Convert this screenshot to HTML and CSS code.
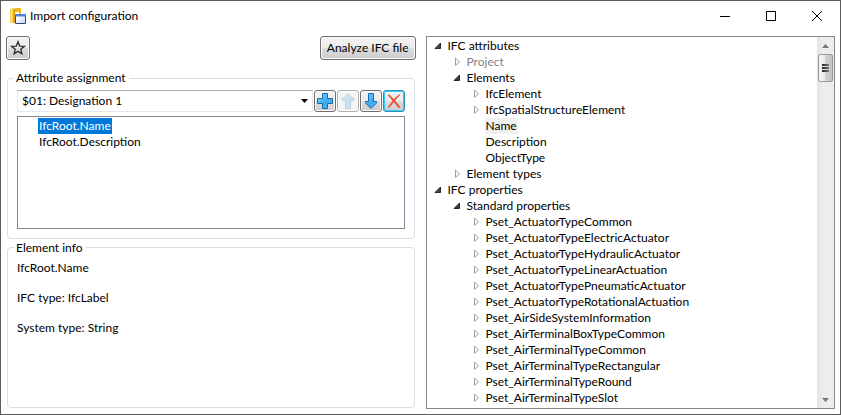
FILE: index.html
```html
<!DOCTYPE html>
<html lang="en">
<head>
<meta charset="utf-8">
<title>Import configuration</title>
<link rel="stylesheet" href="styles.css">
</head>
<body>
<div class="window">
  <header class="titlebar">
    <svg class="app-icon" width="16" height="16" viewBox="0 0 16 16" aria-hidden="true">
      <defs>
        <linearGradient id="gold" x1="0" x2="1"><stop offset="0" stop-color="#f3c437"/><stop offset=".3" stop-color="#fdeb9c"/><stop offset=".6" stop-color="#f2bd24"/><stop offset="1" stop-color="#c98f00"/></linearGradient>
        <linearGradient id="pane" x2="1" y2="1"><stop offset=".3" stop-color="#fff"/><stop offset="1" stop-color="#bcd0f5"/></linearGradient>
      </defs>
      <path fill="#f0b923" d="M5 0h6v14H5z"/>
      <path fill="#fffbe8" d="M5 4h4v10H5z"/>
      <path fill="#222" d="M5 14h3v1H5z"/>
      <path fill="url(#gold)" d="M0 1Q2.500 -.5 5 1V14.500Q2.500 16 0 14.500z"/>
      <path fill="url(#pane)" stroke="#33477d" d="M5.500 6.500h10v9h-10z"/>
      <path fill="#4f7ce0" d="M5 6h11v2.500H5z"/>
    </svg>
    <h1 class="title">Import configuration</h1>
    <div class="caption-buttons">
      <button class="caption" aria-label="Minimize"><svg width="10" height="10"><path d="M0 5.500h10"/></svg></button>
      <button class="caption" aria-label="Maximize"><svg width="10" height="10"><path d="M.5 .5h9v9h-9z"/></svg></button>
      <button class="caption" aria-label="Close"><svg width="10" height="10"><path d="M0 0l10 10M10 0L0 10"/></svg></button>
    </div>
  </header>
  <main class="content">
    <div class="left">
      <div class="toolbar">
        <button class="btn icon-btn" aria-label="Favorites"><svg width="16" height="16" viewBox="0 0 16 16"><path fill="none" stroke="#333" stroke-width="1.400" d="M8 1.800l1.700 4.300 4.600.3-3.500 2.900 1.100 4.500L8 11.300l-3.900 2.500 1.100-4.500-3.500-2.900 4.600-.3z"/></svg></button>
        <button class="btn">Analyze IFC file</button>
      </div>
      <fieldset class="group">
        <legend>Attribute assignment</legend>
        <div class="assign-row">
          <div class="combo">
            <select aria-label="Attribute"><option>$01: Designation 1</option></select>
            <svg class="combo-arrow" width="7" height="4" aria-hidden="true"><path d="M0 0h7L3.500 4z"/></svg>
          </div>
          <button class="btn tool" aria-label="Add"><svg width="18" height="18" viewBox="0 0 18 18">
            <defs><linearGradient id="blue" x2="1" y2="1"><stop offset="0" stop-color="#8fd6fb"/><stop offset=".55" stop-color="#3aaaf0"/><stop offset="1" stop-color="#4fc0fa"/></linearGradient></defs>
            <path fill="url(#blue)" stroke="#1969ad" d="M6.500 1.500h5v5h5v5h-5v5h-5v-5h-5v-5h5z"/></svg></button>
          <button class="btn tool" aria-label="Move up" disabled><svg width="18" height="18" viewBox="0 0 18 18"><path fill="url(#blue)" stroke="#1969ad" d="M9 1.500L14.500 7v1.500h-3v8h-5v-8h-3V7z"/></svg></button>
          <button class="btn tool" aria-label="Move down"><svg width="18" height="18" viewBox="0 0 18 18"><path fill="url(#blue)" stroke="#1969ad" d="M6.500 1.500h5v8h3V11L9 16.500 3.500 11V9.500h3z"/></svg></button>
          <button class="btn tool hot" aria-label="Delete"><svg width="18" height="18" viewBox="0 0 18 18"><path fill="#f2502f" stroke="#d43420" stroke-width=".3" d="M3.800 2.400Q6.500 4.400 8.800 7.600 11.500 4.200 14.600 2.400l.5.5Q12.200 5.500 9.800 8.700q2.900 3 5.200 6.200l-1.200 1Q11.200 12.800 8.800 10.100 6.600 13 3.900 15.600l-.9-.8Q5.700 12 7.700 8.900 5.500 5.800 2.900 3.300z"/></svg></button>
        </div>
        <ul class="list" role="listbox" aria-label="Assigned attributes">
          <li role="option" aria-selected="true"><span>IfcRoot.Name</span></li>
          <li role="option" aria-selected="false"><span>IfcRoot.Description</span></li>
        </ul>
      </fieldset>
      <fieldset class="group info">
        <legend>Element info</legend>
        <p>IfcRoot.Name</p>
        <p>IFC type: IfcLabel</p>
        <p>System type: String</p>
      </fieldset>
    </div>
    <div class="tree-box">
      <ul class="tree" role="tree" aria-label="IFC tree">
        <li><div class="node"><button class="toggle open" aria-label="Collapse"></button><span>IFC attributes</span></div>
          <ul>
            <li><div class="node muted"><button class="toggle" aria-label="Expand"></button><span>Project</span></div></li>
            <li><div class="node"><button class="toggle open" aria-label="Collapse"></button><span>Elements</span></div>
              <ul>
                <li><div class="node"><button class="toggle" aria-label="Expand"></button><span>IfcElement</span></div></li>
                <li><div class="node"><button class="toggle" aria-label="Expand"></button><span>IfcSpatialStructureElement</span></div></li>
                <li><div class="node leaf current"><span>Name</span></div></li>
                <li><div class="node leaf"><span>Description</span></div></li>
                <li><div class="node leaf"><span>ObjectType</span></div></li>
              </ul>
            </li>
            <li><div class="node"><button class="toggle" aria-label="Expand"></button><span>Element types</span></div></li>
          </ul>
        </li>
        <li><div class="node"><button class="toggle open" aria-label="Collapse"></button><span>IFC properties</span></div>
          <ul>
            <li><div class="node"><button class="toggle open" aria-label="Collapse"></button><span>Standard properties</span></div>
              <ul>
                <li><div class="node"><button class="toggle" aria-label="Expand"></button><span>Pset_ActuatorTypeCommon</span></div></li>
                <li><div class="node"><button class="toggle" aria-label="Expand"></button><span>Pset_ActuatorTypeElectricActuator</span></div></li>
                <li><div class="node"><button class="toggle" aria-label="Expand"></button><span>Pset_ActuatorTypeHydraulicActuator</span></div></li>
                <li><div class="node"><button class="toggle" aria-label="Expand"></button><span>Pset_ActuatorTypeLinearActuation</span></div></li>
                <li><div class="node"><button class="toggle" aria-label="Expand"></button><span>Pset_ActuatorTypePneumaticActuator</span></div></li>
                <li><div class="node"><button class="toggle" aria-label="Expand"></button><span>Pset_ActuatorTypeRotationalActuation</span></div></li>
                <li><div class="node"><button class="toggle" aria-label="Expand"></button><span>Pset_AirSideSystemInformation</span></div></li>
                <li><div class="node"><button class="toggle" aria-label="Expand"></button><span>Pset_AirTerminalBoxTypeCommon</span></div></li>
                <li><div class="node"><button class="toggle" aria-label="Expand"></button><span>Pset_AirTerminalTypeCommon</span></div></li>
                <li><div class="node"><button class="toggle" aria-label="Expand"></button><span>Pset_AirTerminalTypeRectangular</span></div></li>
                <li><div class="node"><button class="toggle" aria-label="Expand"></button><span>Pset_AirTerminalTypeRound</span></div></li>
                <li><div class="node"><button class="toggle" aria-label="Expand"></button><span>Pset_AirTerminalTypeSlot</span></div></li>
              </ul>
            </li>
          </ul>
        </li>
      </ul>
      <div class="scrollbar" aria-hidden="true">
        <svg class="scroll-arrow" width="17" height="17"><path d="M5 11h7L8.500 7z"/></svg>
        <div class="thumb"><i></i><i></i><i></i></div>
        <svg class="scroll-arrow end" width="17" height="17"><path d="M5 7h7L8.500 11z"/></svg>
      </div>
    </div>
  </main>
</div>
<script src="tree.js"></script>
</body>
</html>
```
FILE: tree.js
```js
const SVG_OPEN = '<svg width="8" height="8"><path d="M6.500 1v5.500H1z" fill="#404040" stroke="#262626"/></svg>';
const SVG_CLOSED = '<svg width="8" height="10"><path d="M2.500 1v7.500L6.500 4.800z" fill="#fff" stroke="#a0a0a0"/></svg>';

document.querySelectorAll('.toggle').forEach((toggle) => {
  toggle.innerHTML = toggle.classList.contains('open') ? SVG_OPEN : SVG_CLOSED;
});
```
FILE: styles.css
```css
* {
  box-sizing: border-box;
}

body {
  margin: 0;
  font: 12px/16px Lato, "Open Sans", sans-serif;
  color: #000;
}

button,
select {
  font: inherit;
  color: inherit;
}

ul {
  list-style: none;
  margin: 0;
  padding: 0;
}

.window {
  display: flex;
  flex-direction: column;
  height: 100vh;
  background: #fff;
  border: 1px solid #5c5a5c;
}

.titlebar {
  display: flex;
  align-items: center;
  gap: 4px;
  height: 30px;
  padding-left: 9px;
}

.title {
  margin: 0;
  font-size: 12px;
  font-weight: 400;
}

.caption-buttons {
  display: flex;
  margin-left: auto;
}

.caption {
  display: grid;
  place-items: center;
  width: 46px;
  height: 30px;
  padding: 0;
  border: 0;
  background: none;
}

.caption svg {
  fill: none;
  stroke: #000;
}

.content {
  display: grid;
  grid-template-columns: 1fr 1fr;
  gap: 10px;
  flex: 1;
  min-height: 0;
  padding: 5px;
}

.left {
  display: flex;
  flex-direction: column;
  min-height: 0;
}

.toolbar {
  display: flex;
  justify-content: space-between;
  margin-bottom: 10px;
}

.btn {
  display: grid;
  place-items: center;
  height: 24px;
  padding: 0 6px;
  border: 1px solid #707070;
  border-radius: 3px;
  background: linear-gradient(#f3f3f3, #ebebeb 50%, #ddd 50%, #cdcdcd);
  box-shadow: inset 0 0 0 1px #fafafa;
}

.icon-btn {
  width: 24px;
  padding: 0;
}

.group {
  display: flex;
  flex-direction: column;
  flex: 1;
  min-width: 0;
  min-height: 0;
  margin: 0 1px 1px;
  padding: 4px 9px 9px;
  border: 1px solid #d5dfe5;
  border-radius: 4px;
}

.group legend {
  margin-left: -3px;
  padding: 0 3px 0 2px;
}

.assign-row {
  display: flex;
  gap: 1px;
  margin-bottom: 4px;
}

.combo {
  position: relative;
  flex: 1;
}

.combo select {
  width: 100%;
  height: 22px;
  padding: 0 4px;
  border: 1px solid #e3e9ef;
  border-top-color: #abadb3;
  appearance: none;
  background: #fff;
}

.combo-arrow {
  position: absolute;
  top: 9px;
  right: 5px;
}

.tool {
  width: 22px;
  height: 22px;
  padding: 0;
}

.tool:disabled {
  border-color: #adb2b5;
  background: #f4f4f4;
}

.tool:disabled svg {
  opacity: 0.25;
}

.hot {
  border-color: #2a8fb5;
  box-shadow: inset 0 0 0 1px #37cdf5;
}

.list {
  flex: 1;
  padding: 1px 20px;
  border: 1px solid #828790;
}

.list span {
  display: inline-block;
  padding: 0 1px;
}

.list [aria-selected="true"] span {
  background: #0078d7;
  color: #fff;
}

.info p {
  margin: 0 0 14px;
}

.tree-box {
  display: flex;
  min-height: 0;
  border: 1px solid #828790;
}

.tree {
  flex: 1;
  overflow: hidden;
  padding: 1px 2px;
}

.tree ul {
  padding-left: 19px;
}

.node {
  display: flex;
  align-items: center;
  height: 16px;
}

.node span {
  padding: 0 1px;
}

.leaf {
  padding-left: 18px;
}

.current span {
  background: #f0f0f0;
}

.muted {
  color: #838383;
}

.toggle {
  display: grid;
  place-items: center;
  width: 18px;
  height: 16px;
  padding: 0;
  border: 0;
  background: none;
}

.scrollbar {
  display: flex;
  flex-direction: column;
  align-items: center;
  width: 17px;
  background: linear-gradient(90deg, #e3e3e3, #ececec 30%, #eee);
}

.scroll-arrow {
  fill: #777;
}

.end {
  margin-top: auto;
}

.thumb {
  display: flex;
  flex-direction: column;
  align-items: center;
  justify-content: center;
  gap: 1px;
  width: 15px;
  height: 28px;
  border: 1px solid #979797;
  border-radius: 2px;
  background: linear-gradient(90deg, #f5f5f5, #e9e9eb 45%, #d2d2d6 50%, #c4c4c8);
}

.thumb i {
  width: 7px;
  height: 2px;
  background: linear-gradient(90deg, #222, #777);
}
```
